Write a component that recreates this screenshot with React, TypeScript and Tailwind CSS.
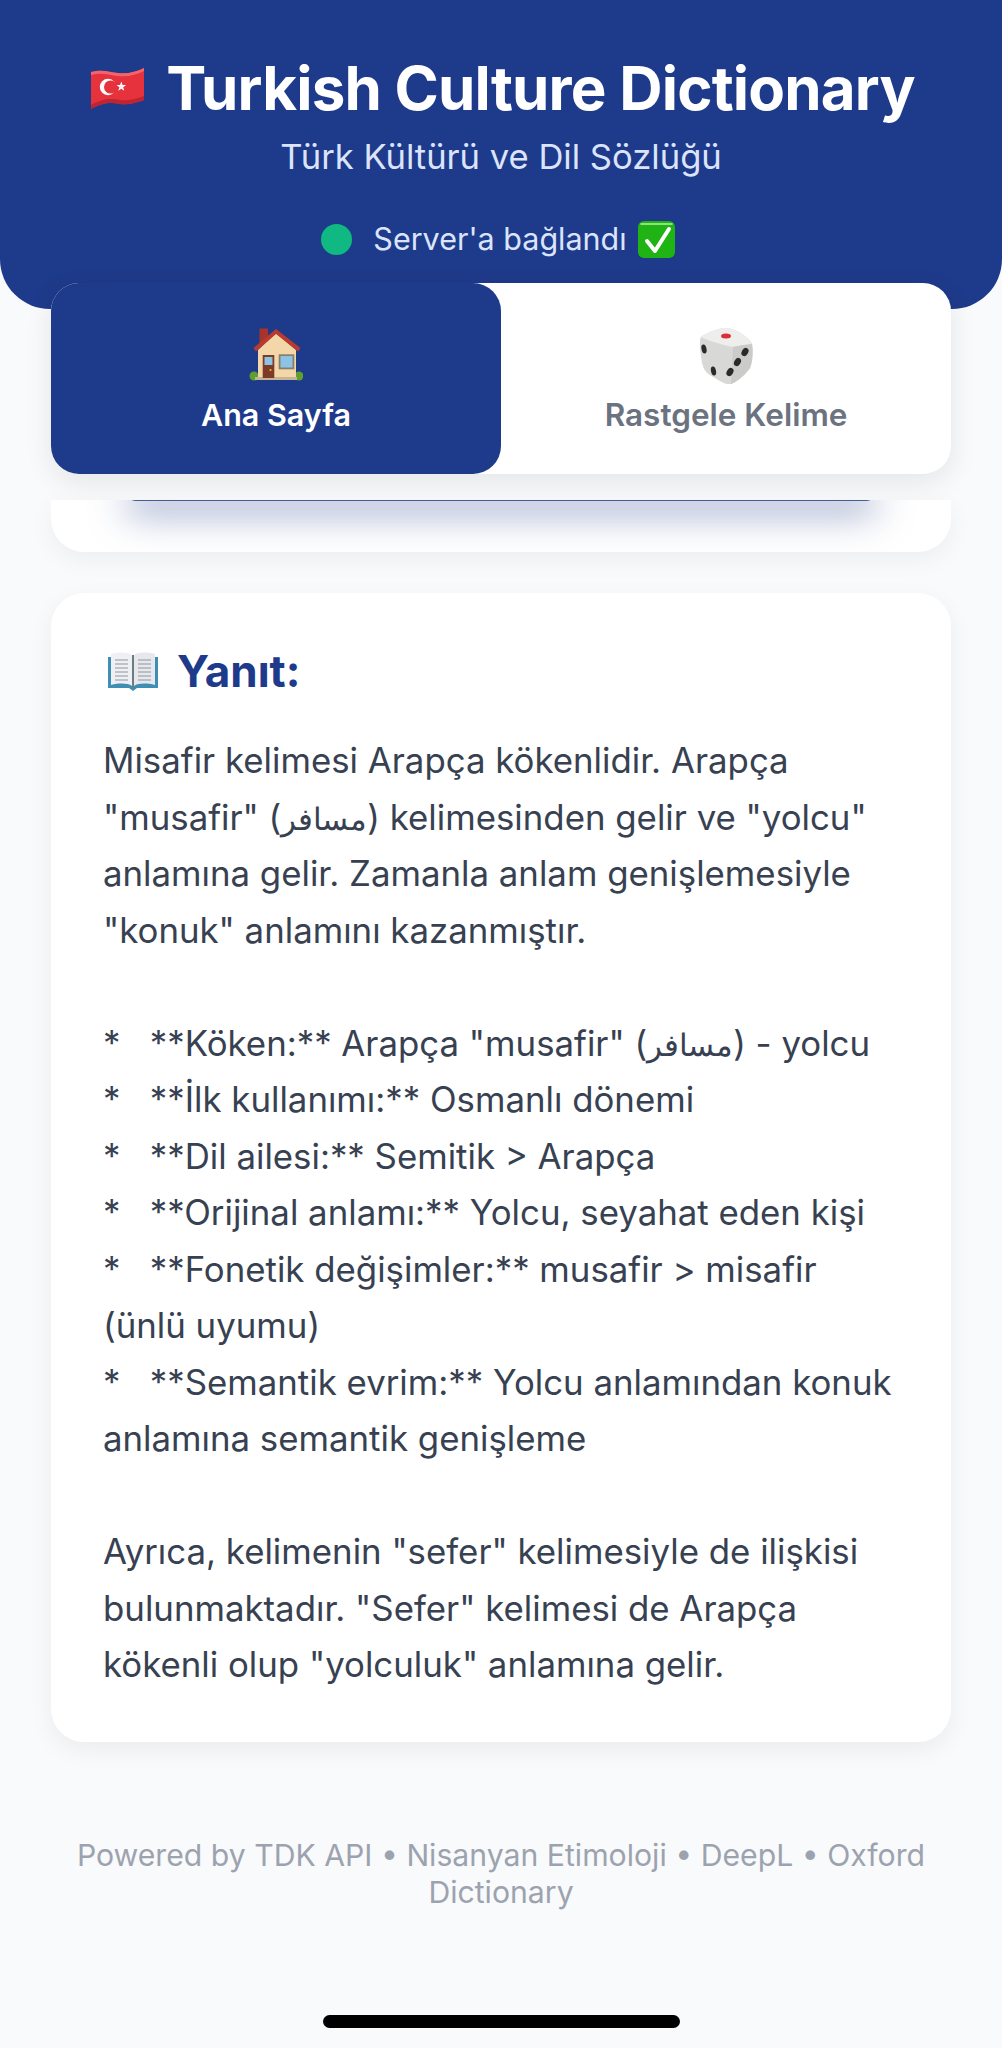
const answer = `Misafir kelimesi Arapça kökenlidir. Arapça "musafir" (مسافر) kelimesinden gelir ve "yolcu" anlamına gelir. Zamanla anlam genişlemesiyle "konuk" anlamını kazanmıştır.

*   **Köken:** Arapça "musafir" (مسافر) - yolcu
*   **İlk kullanımı:** Osmanlı dönemi
*   **Dil ailesi:** Semitik > Arapça
*   **Orijinal anlamı:** Yolcu, seyahat eden kişi
*   **Fonetik değişimler:** musafir > misafir (ünlü uyumu)
*   **Semantik evrim:** Yolcu anlamından konuk anlamına semantik genişleme

Ayrıca, kelimenin "sefer" kelimesiyle de ilişkisi bulunmaktadır. "Sefer" kelimesi de Arapça kökenli olup "yolculuk" anlamına gelir.`;

const FlagIcon = () => (
  <svg viewBox="6 8 54 42" className="w-[54px] h-[42px] shrink-0">
    <path d="M7 13 C18 10 26 13 34 14 C44 15 52 13 60 9 V41 C52 44 44 46 36 45 C26 43 18 44 7 50 Z" fill="#e5323c" />
    <path d="M7 46 C18 40 26 39 36 41 C44 42 52 40 60 37 V41 C52 44 44 46 36 45 C26 43 18 44 7 50 Z" fill="#bf2530" />
    <path d="M7 13 C18 10 26 13 34 14 C44 15 52 13 60 9 V12 C52 16 44 18 34 17 C26 16 18 13 7 16 Z" fill="#f2656c" />
    <circle cx="24" cy="28" r="8.2" fill="#fff" />
    <circle cx="26.6" cy="28" r="6.6" fill="#e5323c" />
    <path d="M37.3 22.6 l1.2 3.4 3.6 .1 -2.9 2.2 1 3.4 -2.9 -2 -3 2 1.1 -3.4 -2.9 -2.2 3.6 -.1 Z" fill="#fff" />
  </svg>
);

const CheckIcon = () => (
  <svg viewBox="18 11 37 37" className="w-[37px] h-[37px] shrink-0">
    <rect x="18" y="11" width="37" height="37" rx="6" fill="#1fb313" />
    <path d="M21 13 H52 C53 13 53 15 52 15 H21 C20 15 20 13 21 13 Z" fill="#8fe07f" />
    <path d="M27 31 L35 41 L49 19" fill="none" stroke="#fff" strokeWidth="4" strokeLinecap="round" strokeLinejoin="round" />
  </svg>
);

const HouseIcon = () => (
  <svg viewBox="8 8 54 54" className="w-[54px] h-[54px]">
    <rect x="18.5" y="8.5" width="8.5" height="16" fill="#a8332a" />
    <circle cx="13" cy="56" r="4.5" fill="#5f9e2f" />
    <circle cx="58" cy="56" r="4.5" fill="#5f9e2f" />
    <path d="M17 30 L35 13 L55 30 V58 H17 Z" fill="#f3d7a8" />
    <path d="M12.5 28 L35 9 L59.5 28 L57 31.5 L35 14 L15 31.5 Z" fill="#b93a2e" />
    <rect x="14" y="57" width="42" height="3" fill="#c5b594" />
    <rect x="21.7" y="35" width="11.6" height="23" fill="#7d3a26" />
    <rect x="23.5" y="37" width="8" height="8" fill="#8cc4e6" />
    <circle cx="29.5" cy="50" r="1.1" fill="#e8b93f" />
    <rect x="37.7" y="34.3" width="15.6" height="15" fill="#8b7d6b" />
    <rect x="39.5" y="36" width="12" height="11.5" fill="#8cc4e6" />
  </svg>
);

const DiceIcon = () => (
  <svg viewBox="7 7 56 56" className="w-[56px] h-[56px]">
    <path d="M35 7 C28 7 14 12 10 16 C8 19 9 30 11 42 C13 50 16 53 24 57 C32 62 36 64 40 63 C46 61 55 53 59 47 C62 40 62 28 61 23 C60 19 52 13 46 10 C42 8 38 7 35 7 Z" fill="#d8d8d6" />
    <path d="M10 16 C14 12 28 7 35 7 C38 7 42 8 46 10 C52 13 60 19 60 23 C52 24 46 25 42 26 C32 24 18 20 10 16 Z" fill="#eeeeec" />
    <path d="M42 26 C46 25 52 24 61 23 C62 28 62 40 59 47 C55 53 46 61 40 63 Z" fill="#cbcbc9" />
    <ellipse cx="35" cy="15" rx="5" ry="2.5" fill="#dc2f36" />
    <ellipse cx="13" cy="28" rx="2.5" ry="4.5" transform="rotate(-12 13 28)" fill="#2a2a2a" />
    <ellipse cx="22.5" cy="50" rx="2.5" ry="4.5" transform="rotate(-12 22.5 50)" fill="#2a2a2a" />
    <ellipse cx="54" cy="31" rx="3.2" ry="4.3" transform="rotate(30 54 31)" fill="#2a2a2a" />
    <ellipse cx="46.5" cy="41" rx="3.2" ry="4.3" transform="rotate(30 46.5 41)" fill="#2a2a2a" />
    <ellipse cx="39" cy="51" rx="3.2" ry="4.3" transform="rotate(30 39 51)" fill="#2a2a2a" />
  </svg>
);

const BookIcon = () => (
  <svg viewBox="0 0 50 39" className="w-[50px] h-[39px] shrink-0">
    <path d="M0 5 H50 V36 H29 L25 39 L21 36 H0 Z" fill="#3f8fb5" />
    <path d="M3 2 C11 0 20 0 24 3 V34 C20 31 11 31 3 33 Z" fill="#eef0f4" />
    <path d="M47 2 C39 0 30 0 26 3 V34 C30 31 39 31 47 33 Z" fill="#e6e8ed" />
    <path d="M24 3 H26 V36 H24 Z" fill="#6d7b82" />
    <path d="M7 8 H20 M7 12 H20 M7 16 H20 M7 20 H20 M7 24 H20 M7 28 H20 M30 8 H43 M30 12 H43 M30 16 H43 M30 20 H43 M30 24 H43 M30 28 H43" stroke="#8f949c" strokeWidth="1" />
  </svg>
);

export default function App() {
  // arapca kelime yedek fontta genis duruyor, biraz kucultuyoruz
  const parts = answer.split("مسافر");

  return (
    <div className="relative min-h-[2048px] bg-[#f9fafb] font-['Inter','Liberation_Sans',sans-serif]">
      <header className="h-[309px] bg-[#1e3a8a] rounded-b-[50px] pt-[55px] text-center">
        <div className="flex items-center justify-center gap-[22px] ml-[3px]">
          <FlagIcon />
          <h1 className="text-[60px] leading-[66px] font-bold tracking-[-0.8px] text-white">Turkish Culture Dictionary</h1>
        </div>
        <p className="mt-[13px] text-[34.6px] leading-[44px] text-[#dbe4fb]">Türk Kültürü ve Dil Sözlüğü</p>
        <div className="mt-[41px] mr-[6px] flex items-center justify-center">
          <span className="w-[31px] h-[31px] rounded-full bg-[#10b981]" />
          <span className="ml-[21px] mr-[11px] text-[30.5px] leading-[40px] text-[#dbe4fb]">Server'a bağlandı</span>
          <CheckIcon />
        </div>
      </header>

      <main className="px-[51px]">
        <nav className="relative z-10 -mt-[26px] h-[191px] flex bg-white rounded-[28px] shadow-[0_8px_28px_rgba(15,23,42,0.09)]">
          <div className="w-[450px] flex flex-col items-center pt-[45px] bg-[#1e3a8a] rounded-[28px]">
            <HouseIcon />
            <span className="mt-[13px] text-[30.5px] leading-[40px] font-semibold text-white">Ana Sayfa</span>
          </div>
          <div className="flex-1 flex flex-col items-center pt-[45px]">
            <DiceIcon />
            <span className="mt-[11px] text-[31.5px] leading-[40px] font-semibold text-[#6b7280]">Rastgele Kelime</span>
          </div>
        </nav>

        {/* ust kart, scroll ile kesilmis */}
        <div className="relative z-20 mt-[26px] h-[52px] bg-white rounded-b-[33px] overflow-hidden shadow-[0_8px_24px_rgba(15,23,42,0.05)]">
          <div className="mx-[75px] -mt-[19px] h-[20px] bg-[#4a5a92] rounded-b-[10px] shadow-[0_12px_36px_rgba(30,58,138,0.5)]" />
        </div>

        <section className="mt-[41px] bg-white rounded-[33px] px-[52px] pt-[50px] pb-[49px] shadow-[0_8px_24px_rgba(15,23,42,0.06)]">
          <h2 className="flex items-center gap-[19px] ml-[5px] text-[44px] leading-[56px] font-bold text-[#1e3a8a]">
            <BookIcon />
            Yanıt:
          </h2>
          <p className="mt-[33px] whitespace-pre-wrap text-[34.8px] leading-[56.5px] text-[#374151]">
            {parts[0]}
            <span className="text-[31px] leading-none">مسافر</span>
            {parts[1]}
            <span className="text-[31px] leading-none">مسافر</span>
            {parts[2]}
          </p>
        </section>

        <footer className="mt-[95px] text-center text-[30.2px] leading-[37px] text-[#9ca3af]">
          Powered by TDK API • Nisanyan Etimoloji • DeepL • Oxford Dictionary
        </footer>
      </main>

      <div className="absolute bottom-[20px] left-[323px] w-[357px] h-[13px] rounded-full bg-black" />
    </div>
  );
}
